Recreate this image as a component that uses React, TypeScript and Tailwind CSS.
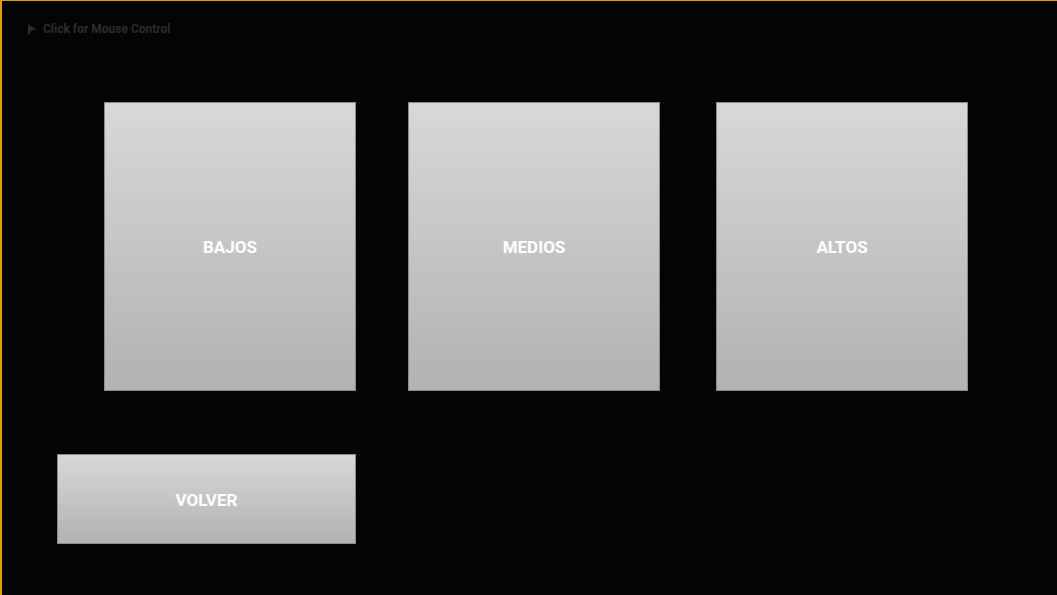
import { FC } from "react";

const Tile: FC<{ label: string; className: string }> = ({ label, className }) => (
  <div
    className={`flex items-center justify-center pt-[3px] border border-[#8a8a8a] bg-gradient-to-b from-[#d8d8d8] to-[#b2b2b2] text-[17px] font-bold text-white ${className}`}
  >
    {label}
  </div>
);

const App: FC = () => {
  return (
    <div
      className="w-[1057px] h-[595px] overflow-hidden bg-[#040404] border-t border-l-2 border-[#e59a00] flex flex-col"
      style={{ fontFamily: "Roboto, 'Liberation Sans', sans-serif" }}
    >
      {/* Mouse control hint */}
      <div className="flex items-center gap-[6px] pl-[26px] pt-[20px] h-[36px] text-[12px] font-bold text-[#2c2c2c]">
        <svg width="9" height="11" viewBox="0 0 9 11">
          <polygon points="0,0 9,6 4,6 0,11" fill="#2c2c2c" />
        </svg>
        <span>Click for Mouse Control</span>
      </div>

      {/* Bandas */}
      <div className="flex mt-[65px] pl-[102px]">
        <Tile label="BAJOS" className="w-[252px] h-[289px]" />
        <Tile label="MEDIOS" className="w-[252px] h-[289px] ml-[52px]" />
        <Tile label="ALTOS" className="w-[252px] h-[289px] ml-[56px]" />
      </div>

      <div className="flex mt-[63px] pl-[55px]">
        <Tile label="VOLVER" className="w-[299px] h-[90px]" />
      </div>
    </div>
  );
};

export default App;
